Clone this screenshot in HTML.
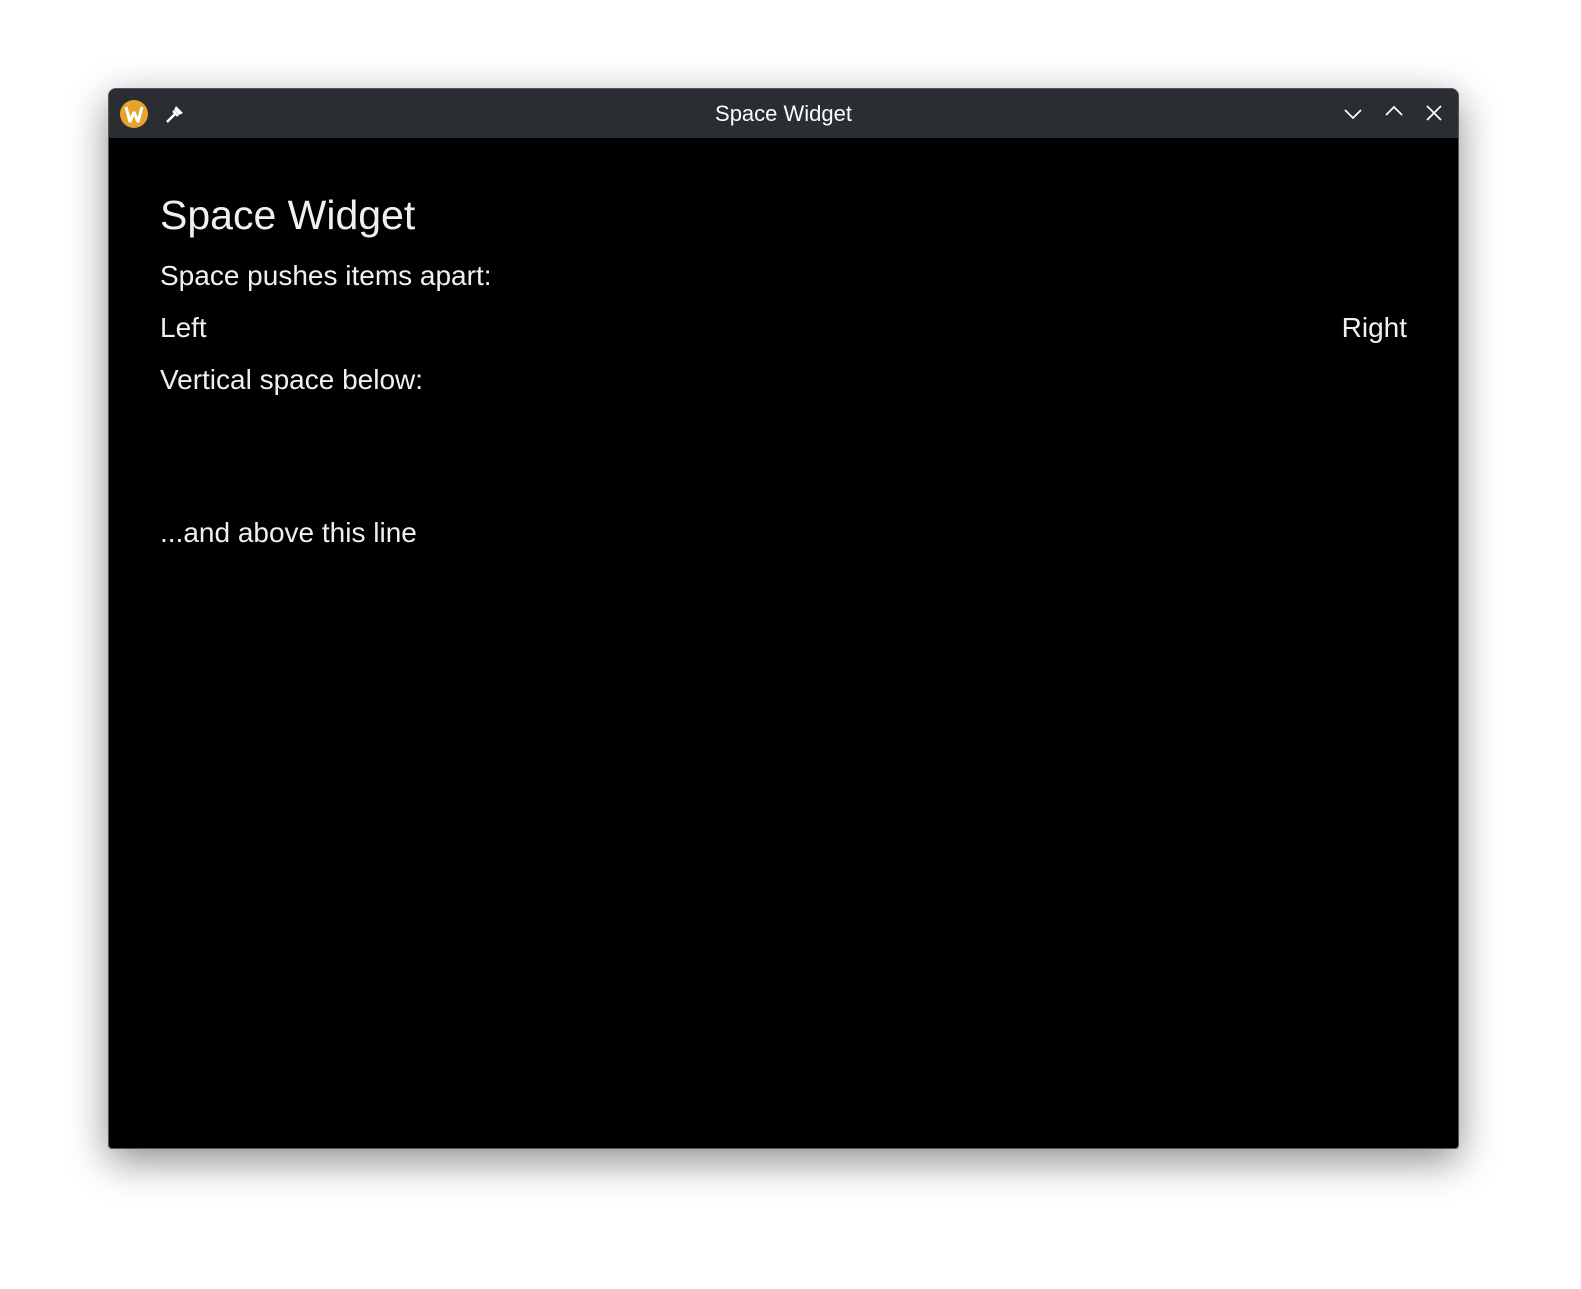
<!DOCTYPE html>
<html><head><style>
body{margin:0;width:1581px;height:1289px;background:#fff;position:relative;overflow:hidden;font-family:"Liberation Sans",sans-serif}
.win{position:absolute;left:108px;top:88px;width:1351px;height:1061px;background:#000;border-radius:8px 8px 4px 4px;box-shadow:0 12px 40px rgba(0,0,0,.45);overflow:hidden;border:1px solid #555;box-sizing:border-box}
.tb{position:absolute;left:0;top:0;right:0;height:49px;background:#2a2e32}
.title{position:absolute;left:0;right:0;top:12px;text-align:center;color:#fcfcfc;font-size:22px}
.t{position:absolute;color:#f0f0f0;white-space:nowrap}
</style></head><body>
<div class="win">
 <div class="tb">
  <svg style="position:absolute;left:10px;top:10px" width="30" height="30" viewBox="0 0 30 30"><circle cx="15" cy="15" r="14" fill="#e6a32e"/><path d="M7 8 L11 23 L15 13 L19 23 L23 8" stroke="#fff" stroke-width="3" fill="none" stroke-linejoin="bevel"/></svg>
  <svg style="position:absolute;left:55px;top:14px" width="22" height="22" viewBox="0 0 22 22"><path d="M12 3 L19 10 L15 12 L10 7 Z" fill="#fff"/><path d="M9 8 L14 13 M11 11 L3 19" stroke="#fff" stroke-width="2.5"/></svg>
  <div class="title">Space Widget</div>
  <svg style="position:absolute;left:1234px;top:16px" width="20" height="16"><path d="M2 5 L10 13 L18 5" stroke="#fff" stroke-width="1.8" fill="none"/></svg>
  <svg style="position:absolute;left:1275px;top:14px" width="20" height="16"><path d="M2 12 L10 4 L18 12" stroke="#fff" stroke-width="1.8" fill="none"/></svg>
  <svg style="position:absolute;left:1316px;top:15px" width="18" height="18"><path d="M2 2 L16 16 M16 2 L2 16" stroke="#fff" stroke-width="1.8"/></svg>
 </div>
 <div class="t" style="left:51px;top:103px;font-size:41px">Space Widget</div>
 <div class="t" style="left:51px;top:171px;font-size:28px">Space pushes items apart:</div>
 <div class="t" style="right:51px;top:223px;font-size:28px">Right</div>
 <div class="t" style="left:51px;top:223px;font-size:28px">Left</div>
 <div class="t" style="left:51px;top:275px;font-size:28px">Vertical space below:</div>
 <div class="t" style="left:51px;top:428px;font-size:28px">...and above this line</div>
</div>
</body></html>
